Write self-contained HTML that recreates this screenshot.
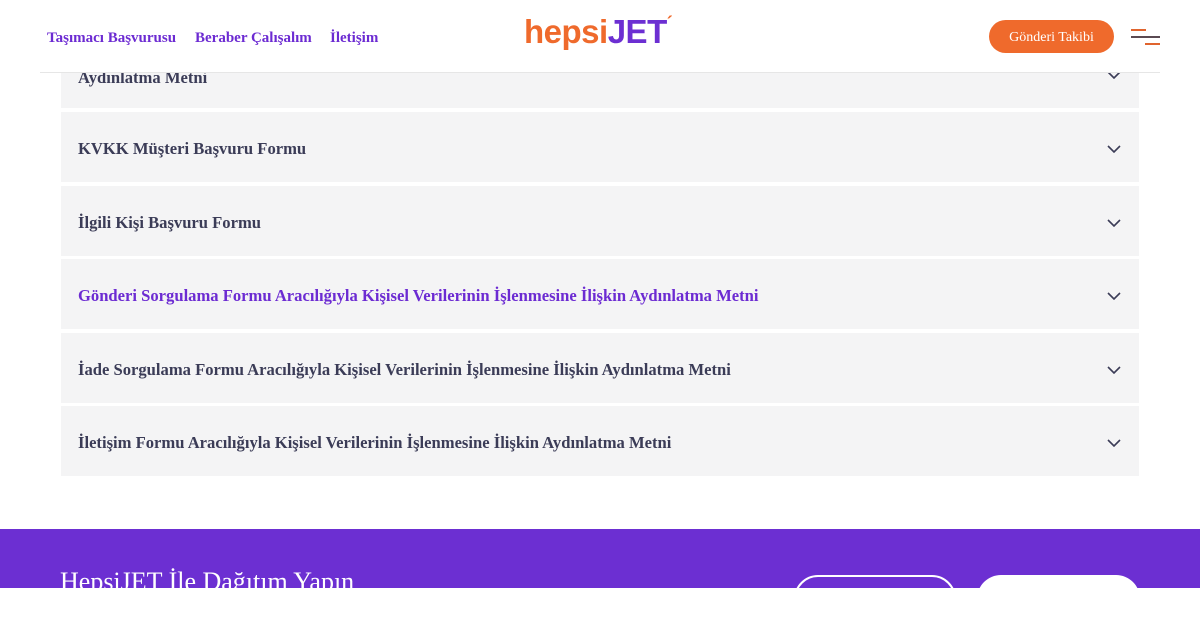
<!DOCTYPE html>
<html><head><meta charset="utf-8"><style>
*{margin:0;padding:0;box-sizing:border-box}
body{width:1200px;height:588px;overflow:hidden;background:#fff;font-family:"Liberation Serif",serif;position:relative}
.hdr{position:absolute;left:0;top:0;width:1200px;height:73px;background:#fff;z-index:5}
.hdr .line{position:absolute;left:40px;right:40px;top:72px;height:1px;background:#e6e6e6}
.nav{position:absolute;top:30px;font-size:15px;font-weight:bold;color:#6c2bd2}
.logo{position:absolute;left:524px;top:13px;font-family:"Liberation Sans",sans-serif;font-weight:bold;font-size:33px;letter-spacing:-0.5px}
.btn{position:absolute;left:989px;top:20px;width:125px;height:33px;border-radius:17px;background:#ef6a2c;color:#fff;font-size:14px;text-align:center;line-height:35px}
.hb{position:absolute;height:2px;background:#e0642e}
.item{position:absolute;left:61px;width:1078px;height:70px;background:#f4f4f5}
.item span{position:absolute;left:17px;top:28px;font-size:16.6px;line-height:18px;font-weight:bold;color:#3b3c57;white-space:nowrap}
.item svg{position:absolute;right:18px;top:33px}
.foot{position:absolute;left:0;top:529px;width:1200px;height:59px;background:#6c2fd2}
</style></head><body>
<div class="hdr">
<div class="nav" style="left:47px">Taşımacı Başvurusu</div>
<div class="nav" style="left:195px">Beraber Çalışalım</div>
<div class="nav" style="left:330px">İletişim</div>
<div class="logo"><span style="color:#ef6a2c">hepsi</span><span style="color:#6c2fd2">JET</span><span style="color:#ef6a2c;font-size:18px;vertical-align:top">´</span></div>
<div class="btn">Gönderi Takibi</div>
<div class="hb" style="left:1131px;top:29px;width:15px"></div>
<div class="hb" style="left:1131px;top:36px;width:29px;background:#5a4a52"></div>
<div class="hb" style="left:1145px;top:43px;width:15px"></div>
<div class="line"></div>
</div>
<div class="item" style="top:38px"><span style="top:31px">Aydınlatma Metni</span><svg width="14" height="8" viewBox="0 0 14 8"><path d="M1 1l6 6 6-6" fill="none" stroke="#3b3c57" stroke-width="1.6"/></svg></div>
<div class="item" style="top:112px"><span>KVKK Müşteri Başvuru Formu</span><svg width="14" height="8" viewBox="0 0 14 8"><path d="M1 1l6 6 6-6" fill="none" stroke="#3b3c57" stroke-width="1.6"/></svg></div>
<div class="item" style="top:186px"><span>İlgili Kişi Başvuru Formu</span><svg width="14" height="8" viewBox="0 0 14 8"><path d="M1 1l6 6 6-6" fill="none" stroke="#3b3c57" stroke-width="1.6"/></svg></div>
<div class="item" style="top:259px"><span style="color:#6c2bd2">Gönderi Sorgulama Formu Aracılığıyla Kişisel Verilerinin İşlenmesine İlişkin Aydınlatma Metni</span><svg width="14" height="8" viewBox="0 0 14 8"><path d="M1 1l6 6 6-6" fill="none" stroke="#3b3c57" stroke-width="1.6"/></svg></div>
<div class="item" style="top:333px"><span>İade Sorgulama Formu Aracılığıyla Kişisel Verilerinin İşlenmesine İlişkin Aydınlatma Metni</span><svg width="14" height="8" viewBox="0 0 14 8"><path d="M1 1l6 6 6-6" fill="none" stroke="#3b3c57" stroke-width="1.6"/></svg></div>
<div class="item" style="top:406px"><span>İletişim Formu Aracılığıyla Kişisel Verilerinin İşlenmesine İlişkin Aydınlatma Metni</span><svg width="14" height="8" viewBox="0 0 14 8"><path d="M1 1l6 6 6-6" fill="none" stroke="#3b3c57" stroke-width="1.6"/></svg></div>
<div class="foot">
<div style="position:absolute;left:60px;top:38px;color:#fff;font-size:26px">HepsiJET İle Dağıtım Yapın</div>
<div style="position:absolute;left:794px;top:46px;width:162px;height:50px;border:2px solid #fff;border-radius:24px"></div>
<div style="position:absolute;left:977px;top:46px;width:163px;height:50px;background:#fff;border-radius:24px"></div>
</div>
</body></html>
